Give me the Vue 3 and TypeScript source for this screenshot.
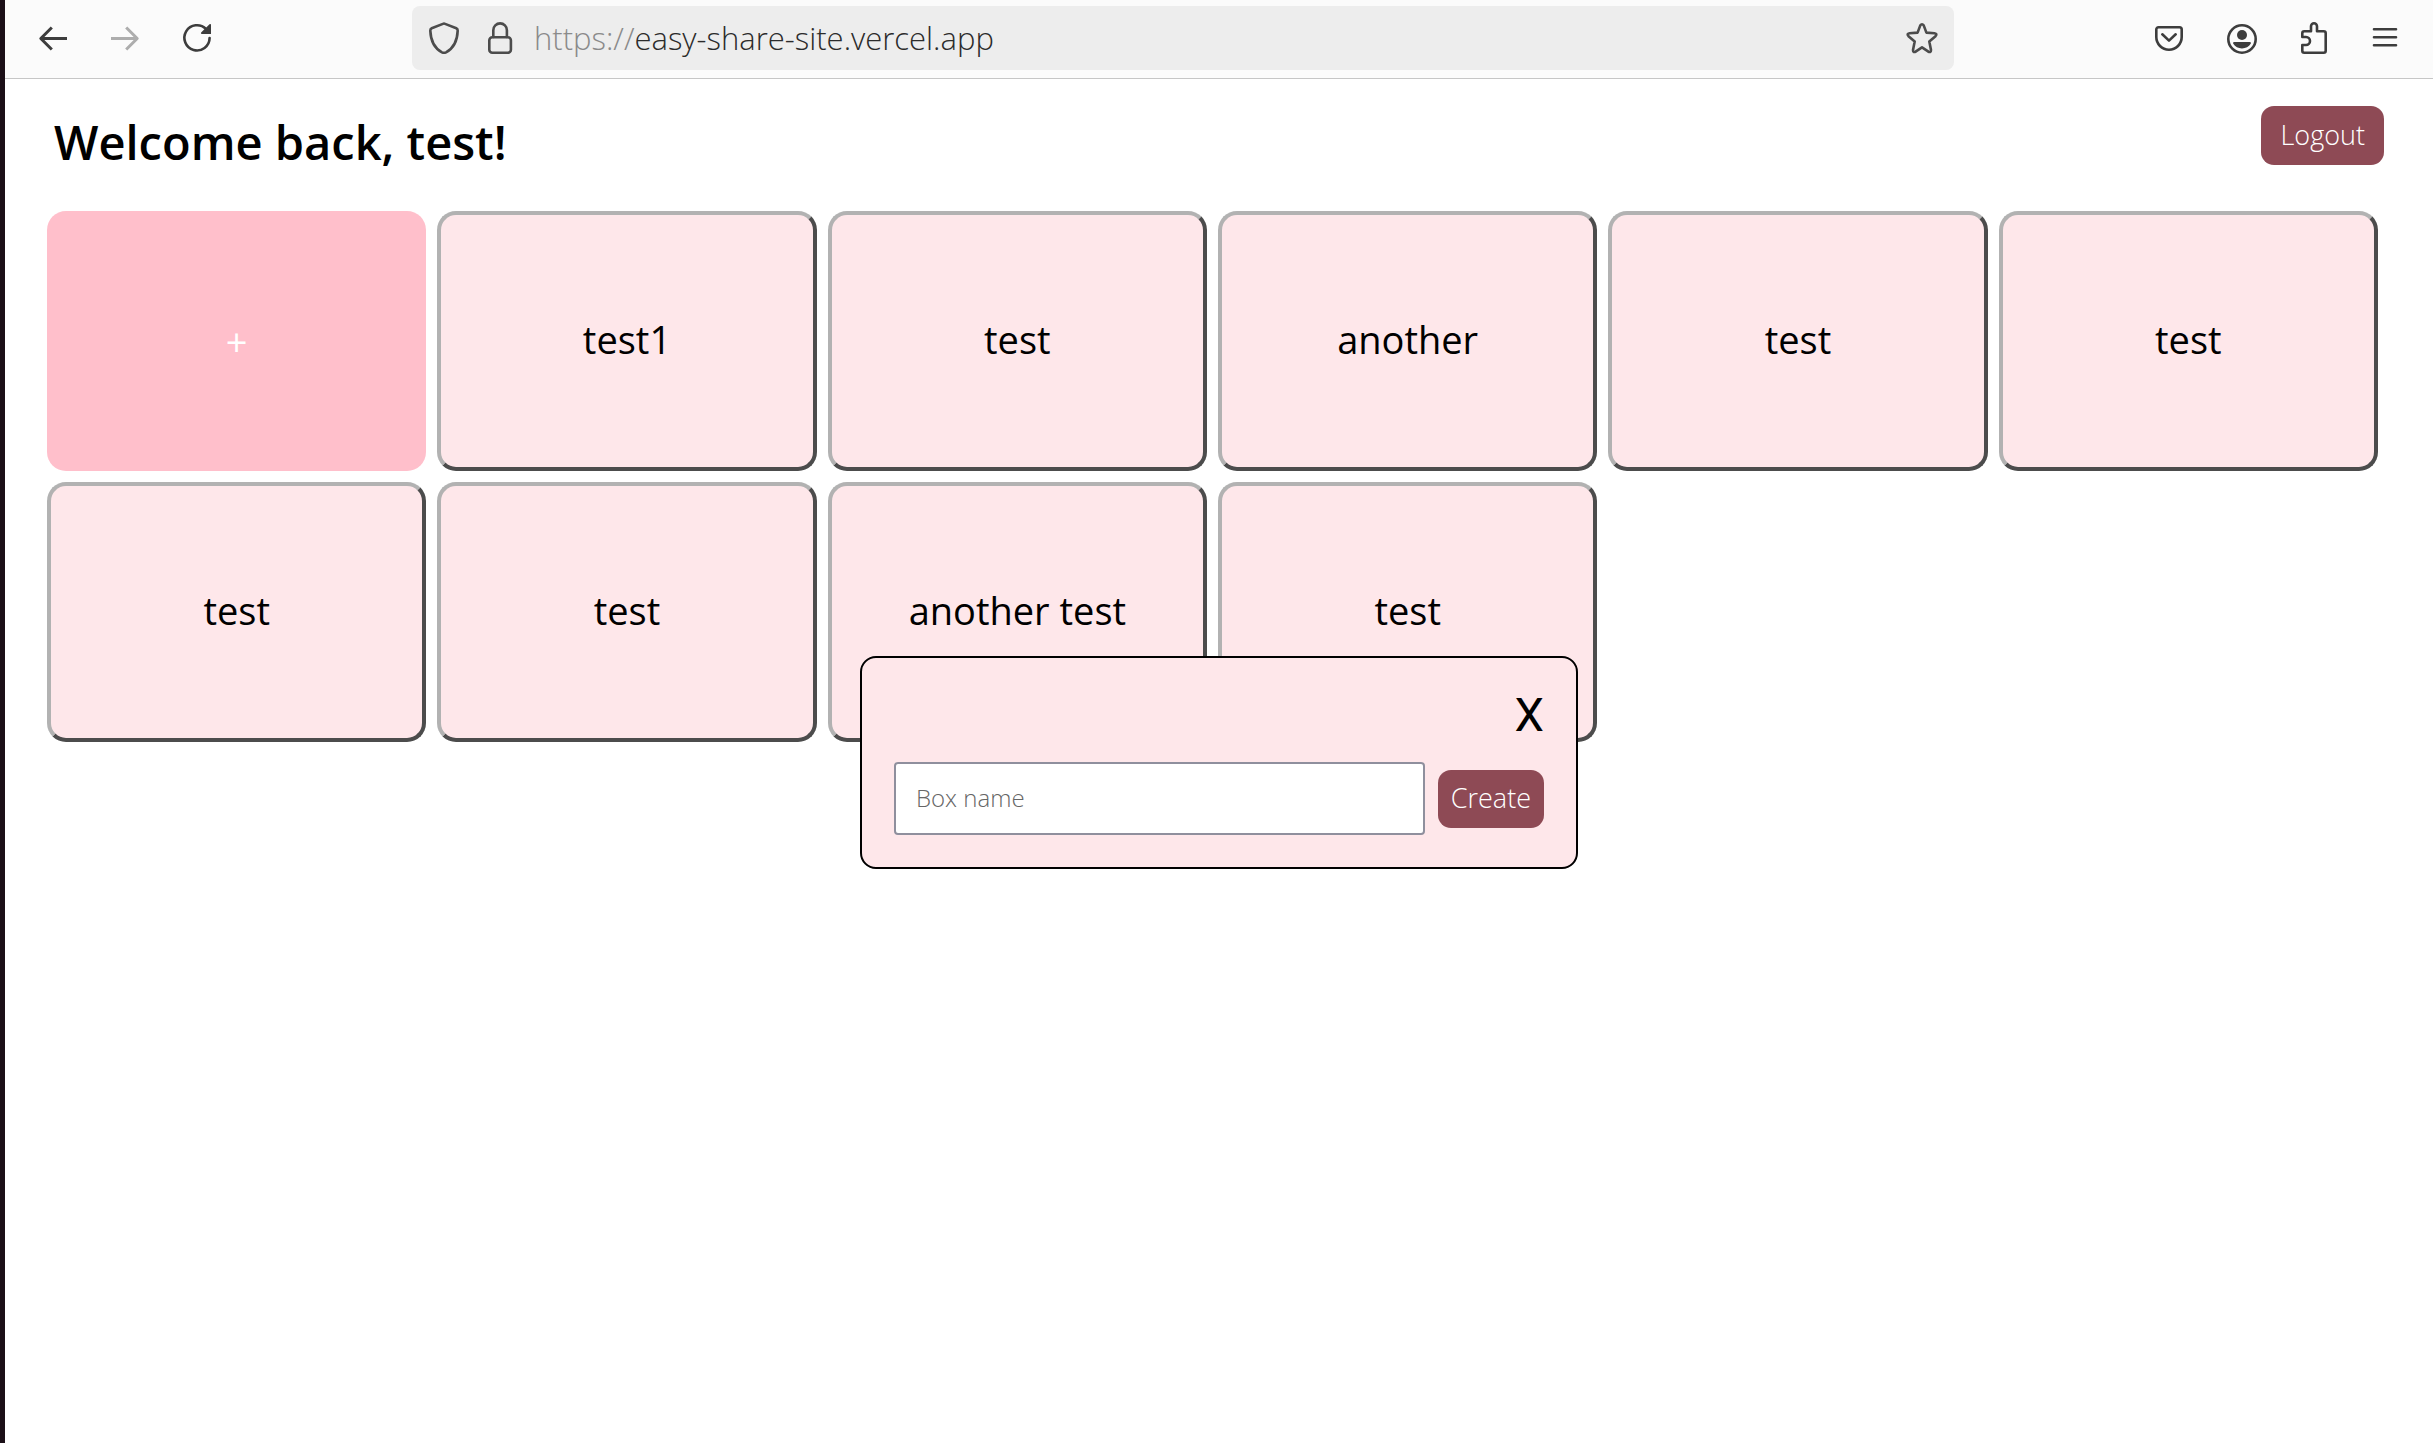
<script setup lang="ts">
import { ref } from 'vue'

interface Box {
  id: number
  name: string
}

const userName = 'test'
const names = ['test1', 'test', 'another', 'test', 'test', 'test', 'test', 'another test', 'test']
const boxes = ref<Box[]>(names.map((name, id) => ({ id, name })))
const boxName = ref('')
const modalOpen = ref(true)

function createBox(): void {
  const name = boxName.value.trim()
  if (!name) return
  boxes.value.push({ id: boxes.value.length, name })
  boxName.value = ''
  modalOpen.value = false
}
</script>

<template>
  <div class="window">
    <nav class="toolbar" aria-label="Browser toolbar">
      <div class="tools">
        <button class="tool" type="button" aria-label="Back">
          <svg viewBox="0 0 36 36"><path class="thick" d="M5.5 18.5H32M16.8 7.5l-11 11 11 11" /></svg>
        </button>
        <button class="tool" type="button" aria-label="Forward" disabled>
          <svg viewBox="0 0 36 36"><path class="thick" d="M4 18.5h26.5M19.2 7.5l11 11-11 11" /></svg>
        </button>
        <button class="tool" type="button" aria-label="Reload">
          <svg viewBox="0 0 36 36">
            <path d="M30.6 18A12.6 12.6 0 1 1 27 9" />
            <path class="solid" d="M32 4.3V14h-9.4q-1.2-.4-.5-1.4l8.7-8.6z" />
          </svg>
        </button>
      </div>

      <div class="address">
        <button class="inner" type="button" aria-label="Tracking protection">
          <svg viewBox="0 0 36 36"><path d="M16.9 3.9q1.1-.7 2.2 0L30.3 8.3q1.5.7 1.4 2.3C31.3 21 27 28.6 20 32.3q-2 1-4 0C9 28.6 4.7 21 4.3 10.6q-.1-1.6 1.4-2.3z" /></svg>
        </button>
        <button class="inner" type="button" aria-label="Site security">
          <svg viewBox="0 0 36 36">
            <rect x="7.3" y="17.3" width="21.6" height="15.4" rx="3" />
            <path d="M11.3 17v-6.8a6.8 6.8 0 0 1 13.6 0V17" />
          </svg>
        </button>
        <div class="url" role="textbox" aria-label="Address"><span class="scheme">https://</span>easy-share-site.vercel.app</div>
        <button class="inner" type="button" aria-label="Bookmark this page">
          <svg viewBox="0 0 36 36"><path d="M16.2 5.6q1.8-2.6 3.6 0l2.6 7 8.1.6q3.2.5 1 3l-6.2 5.4L27 30q0 2.8-2.6 1.7L18 27.400l-6.400 4.300Q9 32.800 9 30l1.700-8.400-6.200-5.400q-2.200-2.500 1-3l8.100-.6z" /></svg>
        </button>
      </div>

      <div class="tools">
        <button class="tool" type="button" aria-label="Save to Pocket">
          <svg viewBox="0 0 36 36">
            <path d="M7.5 7.3h21a2.2 2.2 0 0 1 2.2 2.2V17a12.7 12.7 0 0 1-25.4 0V9.5a2.2 2.2 0 0 1 2.2-2.2z" />
            <path d="M11.3 14.3l6.7 6.3 6.7-6.3" />
          </svg>
        </button>
        <button class="tool" type="button" aria-label="Account">
          <svg viewBox="-1 0 36 36">
            <circle cx="18" cy="19" r="13.7" />
            <circle class="solid" cx="18" cy="15" r="5" />
            <path class="solid" d="M10.3 22h15.400c1.200 0 1.600.8 1 1.800-1.800 3-5 4.600-8.700 4.600s-6.900-1.600-8.700-4.600c-.6-1-.2-1.800 1-1.800z" />
          </svg>
        </button>
        <button class="tool" type="button" aria-label="Extensions">
          <svg viewBox="-1 0 36 36"><path d="M6.3 17v-3.7a2 2 0 0 1 2-2h6.7V6.3a3 3 0 0 1 6 0v5h6.7a2 2 0 0 1 2 2v17.400a2 2 0 0 1-2 2H8.300a2 2 0 0 1-2-2V25H10a4 4 0 0 0 0-8z" /></svg>
        </button>
        <button class="tool" type="button" aria-label="Menu">
          <svg viewBox="0 0 36 36"><path d="M7 9.2h22M7 17.2h22M7 25.2h22" /></svg>
        </button>
      </div>
    </nav>

    <main class="page">
      <header class="top">
        <h1>Welcome back, {{ userName }}!</h1>
        <button class="action wide" type="button">Logout</button>
      </header>

      <section class="grid" aria-label="Boxes">
        <button class="card add" type="button" aria-label="New box" @click="modalOpen = true">+</button>
        <button v-for="box in boxes" :key="box.id" class="card box" type="button">{{ box.name }}</button>
      </section>

      <div v-if="modalOpen" class="overlay">
        <form class="modal" role="dialog" aria-label="Create box" @submit.prevent="createBox">
          <button class="close" type="button" aria-label="Close" @click="modalOpen = false">X</button>
          <div class="row">
            <input v-model="boxName" class="field" type="text" placeholder="Box name" aria-label="Box name" />
            <button class="action" type="submit">Create</button>
          </div>
        </form>
      </div>
    </main>
  </div>
</template>

<style>
body {
  margin: 0;
  background: #fff;
}
</style>

<style scoped>
.window {
  box-sizing: border-box;
  min-height: 100vh;
  display: flex;
  flex-direction: column;
  border-left: 5px solid #1b0f17;
  color: #000;
  font-family: "Open Sans", "Noto Sans", sans-serif;
}

button,
input {
  margin: 0;
  font-family: inherit;
  font-weight: inherit;
}

.toolbar {
  display: flex;
  align-items: center;
  padding: 6px 12px 8px;
  background: #fbfbfb;
  border-bottom: 1px solid #c6c6c6;
}

.tools {
  display: flex;
}

.tool,
.inner {
  display: flex;
  align-items: center;
  justify-content: center;
  height: 64px;
  padding: 0;
  border: 0;
  background: none;
  color: #3d3d3d;
}

.tool {
  width: 72px;
}

.tool:disabled {
  color: #adadad;
}

.inner {
  width: 56px;
  color: #4c4c4c;
}

svg {
  width: 36px;
  height: 36px;
  fill: none;
  stroke: currentColor;
  stroke-width: 2.6;
  stroke-linecap: round;
  stroke-linejoin: round;
}

.thick {
  stroke-width: 3;
  stroke-linecap: butt;
}

.solid {
  fill: currentColor;
  stroke: none;
}

.address {
  flex: 1;
  display: flex;
  align-items: center;
  margin: 0 179px;
  padding: 0 4px;
  border-radius: 8px;
  background: #ededed;
}

.url {
  flex: 1;
  padding-left: 6px;
  font-size: 31px;
  line-height: 64px;
  font-weight: 300;
  color: #2b2b2b;
}

.scheme {
  color: #8a8a8a;
}

.page {
  position: relative;
  flex: 1;
}

.top {
  display: flex;
  align-items: flex-start;
  justify-content: space-between;
  height: 105px;
  padding: 27px 49px 0;
}

h1 {
  margin: 4px 0 0;
  font-size: 47px;
  line-height: 64px;
  font-weight: 600;
}

.action {
  padding: 10px 13px 12px;
  border: 0;
  border-radius: 13px;
  background: #8e4a55;
  color: #fff;
  font-size: 27px;
  line-height: 36px;
  font-weight: 300;
}

.wide {
  padding: 11px 19px 12px;
}

.grid {
  display: grid;
  grid-template-columns: repeat(6, 1fr);
  gap: 11px;
  padding: 0 55px 40px 42px;
}

.card {
  box-sizing: border-box;
  height: 260px;
  border-radius: 19px;
  font-size: 38px;
}

.add {
  padding: 0;
  border: 0;
  background: #ffbfcb;
  color: #fff;
}

.box {
  padding: 0 0 4px;
  border: 4px solid;
  border-color: #b2b2b2 #4c4c4c #4c4c4c #b2b2b2;
  background: #fee7ea;
  color: #000;
}

.overlay {
  position: absolute;
  inset: 0;
  display: flex;
  align-items: center;
  justify-content: center;
  padding-top: 3px;
}

.modal {
  box-sizing: border-box;
  display: flex;
  flex-direction: column;
  gap: 22px;
  width: 718px;
  max-width: 90%;
  padding: 32px;
  border: 2px solid #000;
  border-radius: 16px;
  background: #fee7ea;
}

.close {
  align-self: flex-end;
  padding: 0;
  border: 0;
  background: none;
  color: #000;
  font-family: Roboto, sans-serif;
  font-size: 47px;
  line-height: 50px;
}

.row {
  display: flex;
  align-items: center;
  gap: 13px;
}

.field {
  flex: 1;
  min-width: 0;
  height: 33px;
  padding: 17px 20px 19px;
  border: 2px solid #8f8f9d;
  border-radius: 4px;
  background: #fff;
  color: #000;
  font-size: 24px;
  font-weight: 300;
}

.field::placeholder {
  color: #666;
  opacity: 1;
}
</style>
